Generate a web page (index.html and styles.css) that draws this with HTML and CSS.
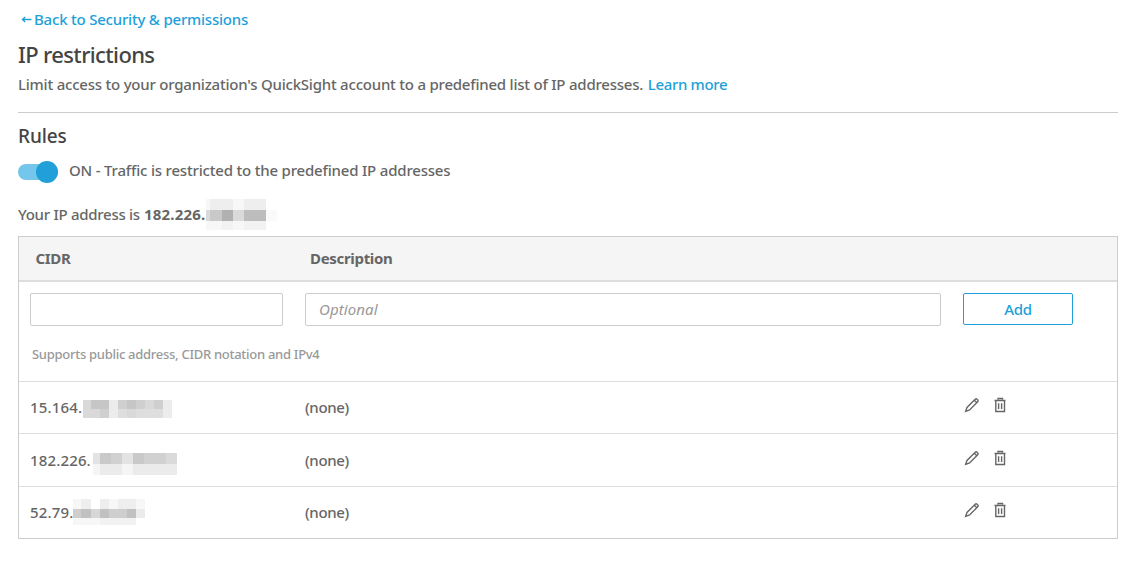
FILE: index.html
```html
<!DOCTYPE html>
<html lang="en">
<head>
<meta charset="utf-8">
<title>IP restrictions</title>
<link rel="stylesheet" href="styles.css">
</head>
<body>
<svg class="defs" width="0" height="0" aria-hidden="true">
  <symbol id="pencil" viewBox="0 0 16 16"><path d="M1.700 14.300l1.300-3.900L11.200 2.300q.9-.9 1.800-.1l.8.8q.8.900-.1 1.800L5.600 13zM10.300 3.200l2.500 2.500" /></symbol>
  <symbol id="trash" viewBox="0 0 12 16"><path d="M0.500 3.500h11M4 2.500V1.500h4.500v1M1.800 3.500v11h8.700v-11M4.600 6.300v5.700M7.600 6.300v5.700" /></symbol>
</svg>
<main class="page">
  <a class="back"><svg class="arrow" width="11" height="10" viewBox="0 0 11 10"><path d="M1 5.500h9.500M4.200 3L1.400 5.500l2.800 2.500"/></svg><span>Back to Security &amp; permissions</span></a>
  <h1 class="title">IP restrictions</h1>
  <p class="lead"><span class="lead-text">Limit access to your organization's QuickSight account to a predefined list of IP addresses.</span> <a class="link">Learn more</a></p>
  <h2 class="subtitle">Rules</h2>
  <div class="switch-row"><span class="switch"><span class="knob"></span></span><span class="switch-label">ON - Traffic is restricted to the predefined IP addresses</span></div>
  <div class="current"><span class="current-label">Your IP address is</span><b class="current-ip">182.226.</b>
    <svg class="mosaic" width="71" height="31" viewBox="0 0 71 31">
      <path fill="#f7f7f7" d="M0 0h4v11H0zM27 0h11v11H27zM0 22h16v9H0zM27 22h11v9H27z"/><path fill="#eee" d="M4 0h23v11H4zM38 0h22v11H38z"/><path fill="#f2f2f2" d="M16 22h11v9H16zM38 22h22v9H38z"/>
      <path fill="#dadada" d="M0 11h4v11H0zM27 11h11v11H27z"/><path fill="#c9c9c9" d="M4 11h12v11H4z"/><path fill="#b1b1b1" d="M16 11h11v11H16z"/><path fill="#bdbdbd" d="M38 11h22v11H38z"/><path fill="#fafafa" d="M60 11h11v11H60z"/>
    </svg>
  </div>
  <section class="table">
    <div class="row head"><span class="cidr">CIDR</span><span class="desc">Description</span></div>
    <div class="form">
      <div class="row fields"><input class="field" aria-label="CIDR"><input class="field" aria-label="Description" placeholder="Optional"><button class="add">Add</button></div>
      <div class="hint">Supports public address, CIDR notation and IPv4</div>
    </div>
    <div class="row item"><div class="ip"><span class="num ip1">15.164.</span>
      <svg class="mosaic mosaic1" width="89" height="18" viewBox="0 0 89 18">
        <path fill="#d9d9d9" d="M0 0h8v18H0zM44 9h9v9H44zM62 0h9v9H62zM8 9h9v9H8z"/><path fill="#c6c6c6" d="M8 0h18v9H8zM44 0h9v9H44z"/><path fill="#ececec" d="M26 0h9v18H26zM80 0h9v18H80z"/><path fill="#cfcfcf" d="M35 0h9v9H35zM53 0h9v9H53zM71 0h9v9H71zM17 9h9v9H17z"/><path fill="#dedede" d="M35 9h9v9H35zM53 9h27v9H53z"/>
      </svg></div><span class="none">(none)</span><span class="actions"><svg class="icon" width="16" height="16"><use href="#pencil"/></svg><svg class="icon" width="12" height="16"><use href="#trash"/></svg></span></div>
    <div class="row item"><div class="ip"><span class="num ip2">182.226.</span>
      <svg class="mosaic mosaic2" width="84" height="22" viewBox="0 0 84 22">
        <path fill="#e3e3e3" d="M0 0h7v11H0zM29 0h11v11H29z"/><path fill="#c9c9c9" d="M7 0h11v11H7zM40 0h11v11H40z"/><path fill="#d1d1d1" d="M18 0h11v11H18zM51 0h22v11H51z"/><path fill="#dadada" d="M73 0h11v11H73z"/><path fill="#f5f5f5" d="M0 11h7v11H0zM29 11h11v11H29z"/><path fill="#ebebeb" d="M7 11h22v11H7zM40 11h44v11H40z"/>
      </svg></div><span>(none)</span><span class="actions"><svg class="icon" width="16" height="16"><use href="#pencil"/></svg><svg class="icon" width="12" height="16"><use href="#trash"/></svg></span></div>
    <div class="row item last"><div class="ip"><span class="num ip3">52.79.</span>
      <svg class="mosaic mosaic3" width="72" height="26" viewBox="0 0 72 26">
        <path fill="#f7f7f7" d="M0 0h8v10H0zM36 0h9v10H36zM63 0h9v10H63zM0 19h27v7H0z"/><path fill="#eee" d="M8 0h10v10H8zM27 0h9v10H27zM45 0h18v10H45z"/><path fill="#cecece" d="M0 10h8v9H0zM36 10h18v9H36z"/><path fill="#c1c1c1" d="M8 10h10v9H8zM27 10h9v9H27zM54 10h9v9H54z"/><path fill="#d7d7d7" d="M18 10h9v9H18z"/><path fill="#ebebeb" d="M63 10h9v9H63z"/><path fill="#f2f2f2" d="M27 19h36v7H27z"/>
      </svg></div><span class="none">(none)</span><span class="actions"><svg class="icon" width="16" height="16"><use href="#pencil"/></svg><svg class="icon" width="12" height="16"><use href="#trash"/></svg></span></div>
  </section>
</main>
</body>
</html>
```
FILE: styles.css
```css
* { box-sizing: border-box; }
body { margin: 0; background: #fff; color: #666; font: 500 15px/20px "Noto Sans", "Open Sans", sans-serif; letter-spacing: -0.22px; }
.defs { display: block; }
.page { width: 1100px; margin-left: 18px; padding-top: 9px; }
.back { display: flex; align-items: center; gap: 2px; height: 20px; padding-left: 3px; color: #219fd9; letter-spacing: -0.21px; }
.arrow, .icon { fill: none; stroke: currentColor; }
.arrow { stroke-width: 1.3; }
.title { margin: 11px 0 0; font-size: 22px; line-height: 28px; font-weight: 500; color: #444; letter-spacing: -0.63px; }
.lead { margin: 6px 0 0; height: 39px; border-bottom: 1px solid #ccc; white-space: nowrap; }
.link { margin-left: 1px; color: #219fd9; letter-spacing: -0.35px; }
.subtitle { margin: 10px 0 0; font-size: 19px; line-height: 26px; font-weight: 500; color: #444; letter-spacing: -0.1px; }
.switch-row { display: flex; align-items: center; gap: 11px; height: 22px; margin-top: 12px; }
.switch { display: flex; justify-content: flex-end; align-items: center; width: 40px; height: 16px; border-radius: 8px; background: #74c6ec; }
.knob { width: 22px; height: 22px; border-radius: 50%; background: #219fd9; }
.switch-label { padding-bottom: 4px; letter-spacing: -0.19px; }
.current { display: flex; align-items: center; height: 31px; margin-top: 16px; }
.current-label { width: 126px; padding-bottom: 2px; white-space: nowrap; letter-spacing: -0.28px; }
.current-ip { width: 62px; padding-bottom: 2px; letter-spacing: 0.2px; }
.mosaic { display: block; flex: none; shape-rendering: crispEdges; }
.mosaic1 { margin-top: 2px; }
.mosaic2 { margin-top: 7px; }
.mosaic3 { margin-bottom: 2px; }
.table { margin-top: 6px; height: 303px; border: 1px solid #ccc; }
.row { display: grid; grid-template-columns: 253px 636px 110px; column-gap: 22px; align-items: center; padding-left: 11px; }
.head { height: 45px; padding-bottom: 2px; border-bottom: 2px solid #ddd; background: #f5f5f5; font-weight: 700; letter-spacing: -0.32px; }
.cidr { padding-left: 5.5px; }
.desc { padding-left: 5px; }
.form { height: 100px; padding-top: 11px; border-bottom: 1px solid #ddd; }
.fields { align-items: start; }
.field { width: 100%; height: 33px; padding: 0 13px 2px; border: 1px solid #ccc; border-radius: 2px; font: inherit; letter-spacing: 0.1px; }
.field::placeholder { color: #999; font-style: italic; font-weight: 400; opacity: 1; }
.add { height: 32px; padding: 0; border: 1px solid #219fd9; border-radius: 2px; background: #fff; color: #219fd9; font: inherit; letter-spacing: -0.3px; }
.hint { margin: 18px 0 0 13px; color: #999; font-size: 13px; line-height: 20px; letter-spacing: -0.28px; }
.item { height: 52px; border-bottom: 1px solid #ddd; letter-spacing: -0.35px; }
.item + .item { height: 53px; }
.item.last { height: 51px; border-bottom: 0; }
.ip { display: flex; align-items: center; }
.num { letter-spacing: 0.15px; }
.ip1 { width: 53px; padding-bottom: 2px; }
.ip2 { width: 63px; }
.ip3 { width: 43px; padding-bottom: 2px; }
.none { padding-bottom: 2px; }
.actions { display: flex; align-items: center; gap: 14px; padding: 0 0 5px 1px; }
.icon { stroke-width: 1.4; }
```
